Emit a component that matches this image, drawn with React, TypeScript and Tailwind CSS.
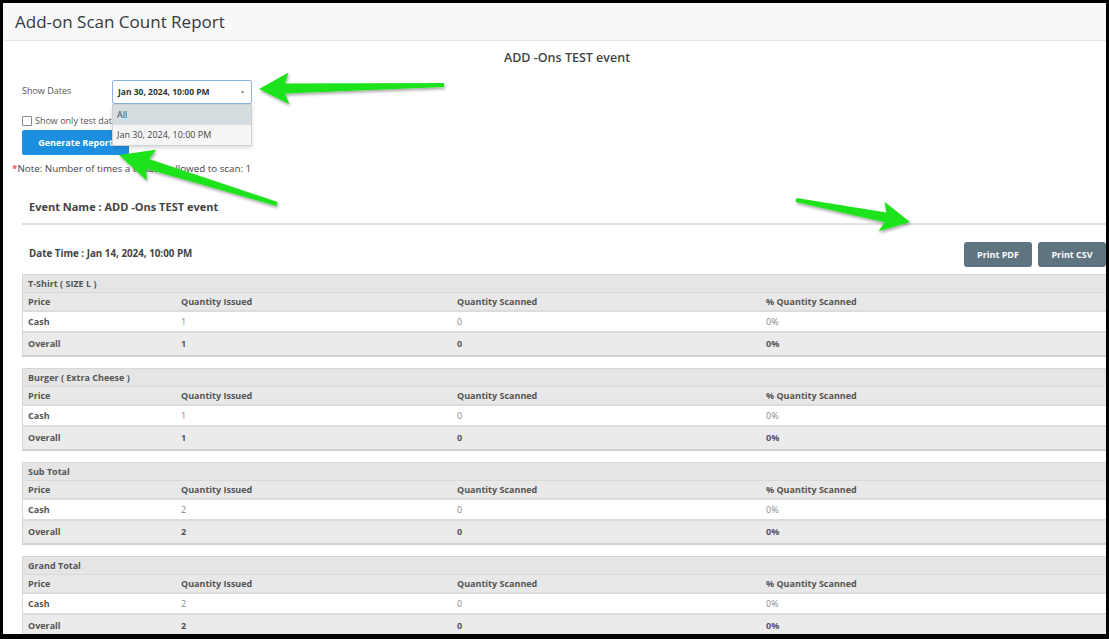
import React from "react";

// ---------------------------------------------------------------------------
// Report data
// ---------------------------------------------------------------------------

const SECTIONS = [
  { title: "T-Shirt ( SIZE L )", issued: 1, scanned: 0 },
  { title: "Burger ( Extra Cheese )", issued: 1, scanned: 0 },
  { title: "Sub Total", issued: 2, scanned: 0 },
  { title: "Grand Total", issued: 2, scanned: 0 },
];

const COLS = "grid grid-cols-[153px_276px_309px_1fr] pl-[5px] items-center";

type Pt = [number, number];

// fat annotation arrow, tapered shaft + swept head
function arrowPoints(tail: Pt, tip: Pt, headLen: number, headHalf: number, shaftHalf: number, tailHalf: number) {
  const dx = tip[0] - tail[0];
  const dy = tip[1] - tail[1];
  const len = Math.hypot(dx, dy);
  const ux = dx / len;
  const uy = dy / len;
  const nx = -uy;
  const ny = ux;
  const bx = tip[0] - ux * headLen;
  const by = tip[1] - uy * headLen;
  const wx = bx - ux * 4;
  const wy = by - uy * 4;
  const pts: Pt[] = [
    [tail[0] + nx * tailHalf, tail[1] + ny * tailHalf],
    [bx + nx * shaftHalf, by + ny * shaftHalf],
    [wx + nx * headHalf, wy + ny * headHalf],
    tip,
    [wx - nx * headHalf, wy - ny * headHalf],
    [bx - nx * shaftHalf, by - ny * shaftHalf],
    [tail[0] - nx * tailHalf, tail[1] - ny * tailHalf],
  ];
  return pts.map((p) => `${p[0].toFixed(1)},${p[1].toFixed(1)}`).join(" ");
}

const ARROWS = [
  arrowPoints([444, 85], [259, 89], 26, 16, 5, 2),
  arrowPoints([277, 204], [119, 155], 30, 16, 5, 2),
  arrowPoints([796, 200], [910, 222], 25, 15, 5, 2),
];

function Section({ title, issued, scanned }: (typeof SECTIONS)[number]) {
  return (
    <div className="border border-[#d6d6d6] border-b-2 border-b-[#d0d0d0] text-[9px] text-[#555]">
      <div className="h-[18px] bg-[#e5e5e5] border-b border-[#d9d9d9] pl-[5px] flex items-center font-bold">
        {title}
      </div>
      <div className={`${COLS} h-[19px] bg-[#e8e8e8] border-b-2 border-[#dcdcdc] font-bold`}>
        <span>Price</span>
        <span>Quantity Issued</span>
        <span>Quantity Scanned</span>
        <span>% Quantity Scanned</span>
      </div>
      <div className={`${COLS} h-[21px] bg-white border-b-2 border-[#dcdcdc] text-[#888]`}>
        <span className="font-bold text-[#555]">Cash</span>
        <span>{issued}</span>
        <span>{scanned}</span>
        <span>0%</span>
      </div>
      <div className={`${COLS} h-[22px] bg-[#ebebeb] font-bold`}>
        <span>Overall</span>
        <span>{issued}</span>
        <span>{scanned}</span>
        <span>0%</span>
      </div>
    </div>
  );
}

export default function App() {
  return (
    <div className="w-[1109px] h-[639px] bg-black pt-[3px] pl-[3px] pr-[3px] pb-[5px]" style={{ fontFamily: "'Open Sans', 'Liberation Sans', sans-serif" }}>
      <div className="relative w-full h-full bg-white overflow-hidden">
        {/* Page header */}
        <div className="h-[38px] bg-[#f8f8f8] border-b border-[#e6e6e6] pl-[12px] flex items-center">
          <h1 className="text-[17px] font-medium text-[#33393f]">Add-on Scan Count Report</h1>
        </div>

        <div className="pl-[19px] mr-[-6px]">
          <div className="text-center text-[12.5px] font-semibold text-[#444] mt-[8px] leading-[17px]">
            ADD -Ons TEST event
          </div>

          {/* Filters */}
          <div className="relative mt-[14px] flex items-start">
            <span className="w-[90px] text-[9px] text-[#555] mt-[4px]">Show Dates</span>
            <div className="relative w-[140px]">
              <div className="h-[24px] border border-[#8ab4df] rounded-[2px] bg-white flex items-center justify-between pl-[5px] pr-[6px] text-[8.5px] font-bold text-[#333]">
                <span>Jan 30, 2024, 10:00 PM</span>
                <span className="text-[5px] text-[#888]">▲</span>
              </div>
              <div className="absolute left-0 top-[24px] w-[140px] z-10 border border-[#d0d0d0] shadow-[0_2px_4px_rgba(0,0,0,0.15)] text-[9px] text-[#444]">
                <div className="h-[20px] bg-[#d5dde1] pl-[4px] flex items-center">All</div>
                <div className="h-[20px] bg-[#f5f5f5] pl-[4px] flex items-center">Jan 30, 2024, 10:00 PM</div>
              </div>
            </div>
          </div>

          <label className="mt-[11px] flex items-center gap-[3px] text-[9px] text-[#555] h-[12px]">
            <span className="w-[10px] h-[10px] border border-[#888] rounded-[1px] bg-white" />
            Show only test data
          </label>

          <button className="mt-[3px] w-[107px] h-[25px] bg-[#1d8fe1] rounded-[2px] text-white text-[9px] font-bold">
            Generate Report
          </button>

          <p className="mt-[8px] ml-[-10px] text-[9.8px] text-[#444] leading-[12px]">
            <span className="text-red-600">*</span>Note: Number of times a ticket is allowed to scan: 1
          </p>

          {/* Event */}
          <div className="mt-[24px] pl-[7px] text-[11px] font-bold text-[#444] leading-[16px]">
            Event Name : ADD -Ons TEST event
          </div>
          <div className="mt-[8px] border-t-2 border-[#e2e2e2]" />

          <div className="mt-[17px] flex items-center justify-between pr-[6px]">
            <span className="pl-[7px] text-[9.8px] font-bold text-[#444] mt-[-1px]">Date Time : Jan 14, 2024, 10:00 PM</span>
            <div className="flex gap-[6px]">
              <button className="w-[68px] h-[25px] bg-[#5e7480] rounded-[3px] text-white text-[9px] font-bold">Print PDF</button>
              <button className="w-[68px] h-[25px] bg-[#5e7480] rounded-[3px] text-white text-[9px] font-bold">Print CSV</button>
            </div>
          </div>

          {/* Tables */}
          <div className="mt-[7px] flex flex-col gap-[11px]">
            {SECTIONS.map((s) => (
              <Section key={s.title} {...s} />
            ))}
          </div>
        </div>

        {/* Annotation arrows */}
        <svg className="absolute inset-0 pointer-events-none" width="1103" height="631" viewBox="3 3 1103 631">
          <defs>
            <filter id="sh" x="-20%" y="-20%" width="140%" height="140%">
              <feDropShadow dx="1" dy="2" stdDeviation="1.5" floodColor="#000" floodOpacity="0.35" />
            </filter>
          </defs>
          {ARROWS.map((p, i) => (
            <polygon key={i} points={p} fill="#1ee31a" filter="url(#sh)" />
          ))}
        </svg>
      </div>
    </div>
  );
}
